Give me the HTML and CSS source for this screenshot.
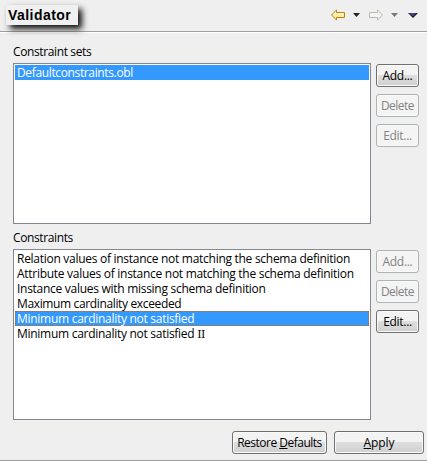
FILE: index.html
```html
<!DOCTYPE html>
<html lang="en">
<head>
<meta charset="utf-8">
<title>Validator</title>
<link rel="stylesheet" href="styles.css">
</head>
<body>
<div class="page">
  <header class="header">
    <h1 class="title">Validator</h1>
    <svg class="nav" width="94" height="14" viewBox="0 0 94 14">
      <defs>
        <linearGradient id="gold" x2="0" y2="1"><stop offset="0" stop-color="#fffbe0"/><stop offset="1" stop-color="#ffe07a"/></linearGradient>
      </defs>
      <path d="M1.6 7 L6.5 1.9 V4.5 H14.5 V9.5 H6.5 V12.1 Z" fill="url(#gold)" stroke="#bd8210"/>
      <path d="M23 5 H30 L26.5 9 Z" fill="#222"/>
      <path d="M52.4 7 L47.5 1.9 V4.5 H39.5 V9.5 H47.5 V12.1 Z" fill="#f4f4f0" stroke="#b9b9b4"/>
      <path d="M61 5 H68 L64.5 9 Z" fill="#777"/>
      <path d="M78 5 H88 L83 10 Z" fill="#16162c"/>
      <path d="M79 5 H86 L83 8.5 Z" fill="#454583"/>
    </svg>
  </header>
  <main class="body">
    <section class="group sets">
      <h2 class="label">Constraint sets</h2>
      <div class="row">
        <ul class="list">
          <li class="selected">Defaultconstraints.obl</li>
        </ul>
        <div class="buttons">
          <button>Add...</button>
          <button class="delete" disabled>Delete</button>
          <button disabled>Edit...</button>
        </div>
      </div>
    </section>
    <section class="group rules">
      <h2 class="label">Constraints</h2>
      <div class="row">
        <ul class="list">
          <li>Relation values of instance not matching the schema definition</li>
          <li>Attribute values of instance not matching the schema definition</li>
          <li>Instance values with missing schema definition</li>
          <li class="tight">Maximum cardinality exceeded</li>
          <li class="selected focused">Minimum cardinality not satisfied</li>
          <li>Minimum cardinality not satisfied <span class="numeral">II</span></li>
        </ul>
        <div class="buttons">
          <button disabled>Add...</button>
          <button class="delete" disabled>Delete</button>
          <button>Edit...</button>
        </div>
      </div>
    </section>
  </main>
  <footer class="footer">
    <button class="restore">Restore <u>D</u>efaults</button>
    <button class="apply"><u>A</u>pply</button>
  </footer>
</div>
</body>
</html>
```
FILE: styles.css
```css
* { box-sizing: border-box; }
body {
  margin: 0;
  background: #efefef;
  color: #000;
  font: 12px/15px "Open Sans", "Noto Sans", sans-serif;
}
.page {
  width: 427px;
  height: 461px;
  display: flex;
  flex-direction: column;
  border-bottom: 1px solid #a0a0a0;
  overflow: hidden;
}
.header {
  height: 33px;
  flex: none;
  display: flex;
  justify-content: space-between;
  align-items: flex-start;
  padding: 5px 3px 0 6px;
  border-bottom: 1px solid #fff;
  box-shadow: inset 0 -1px #a0a0a0;
}
.title {
  margin: 0;
  width: 72px;
  height: 20px;
  padding-left: 2px;
  background: #f0f0f0;
  box-shadow: 4px 4px 6px #111;
  font: bold 14px/21px "Liberation Sans", sans-serif;
  letter-spacing: 0.45px;
}
.nav { margin-top: 3px; display: block; }
.body { padding: 0 7px 0 13px; flex: none; }
.label {
  margin: 0;
  height: 15px;
  font: inherit;
  letter-spacing: -0.38px;
}
.sets { padding-top: 11px; }
.rules { padding-top: 6px; }
.row { display: flex; gap: 5px; margin-top: 4px; }
.list {
  width: 358px;
  margin: 0;
  padding: 1px;
  list-style: none;
  background: #fff;
  border: 1px solid #828790;
  letter-spacing: -0.28px;
}
.sets .list { height: 161px; letter-spacing: -0.36px; }
.rules .list { height: 171px; }
.list li {
  height: 15px;
  padding-left: 2px;
  white-space: nowrap;
}
.list .tight { letter-spacing: -0.36px; }
.list .selected { background: #3399ff; color: #fff; }
.list .focused { border: 1px dotted #cc6600; padding-left: 1px; line-height: 13px; }
.buttons {
  display: flex;
  flex-direction: column;
  gap: 7px;
  padding-top: 1px;
}
button {
  width: 43px;
  height: 23px;
  padding: 0;
  font: inherit;
  line-height: 20px;
  letter-spacing: -0.3px;
  color: #000;
  white-space: nowrap;
  border: 1px solid #707070;
  border-radius: 3px;
  background: linear-gradient(#f3f3f3 0 48%, #dedede 50%, #cfcfcf);
  box-shadow: inset 0 0 0 1px #fafafa;
}
button:disabled {
  color: #838383;
  border-color: #adb2b5;
  background: #f4f4f4;
}
.delete { letter-spacing: -0.5px; }
.footer {
  display: flex;
  justify-content: flex-end;
  gap: 7px;
  padding: 11px 3px 0 0;
}
.restore { width: 95px; letter-spacing: -0.5px; }
.apply { width: 90px; letter-spacing: -0.1px; }
.numeral { font-family: "DejaVu Serif", serif; font-size: 11px; line-height: 1; letter-spacing: -0.5px; }
```
